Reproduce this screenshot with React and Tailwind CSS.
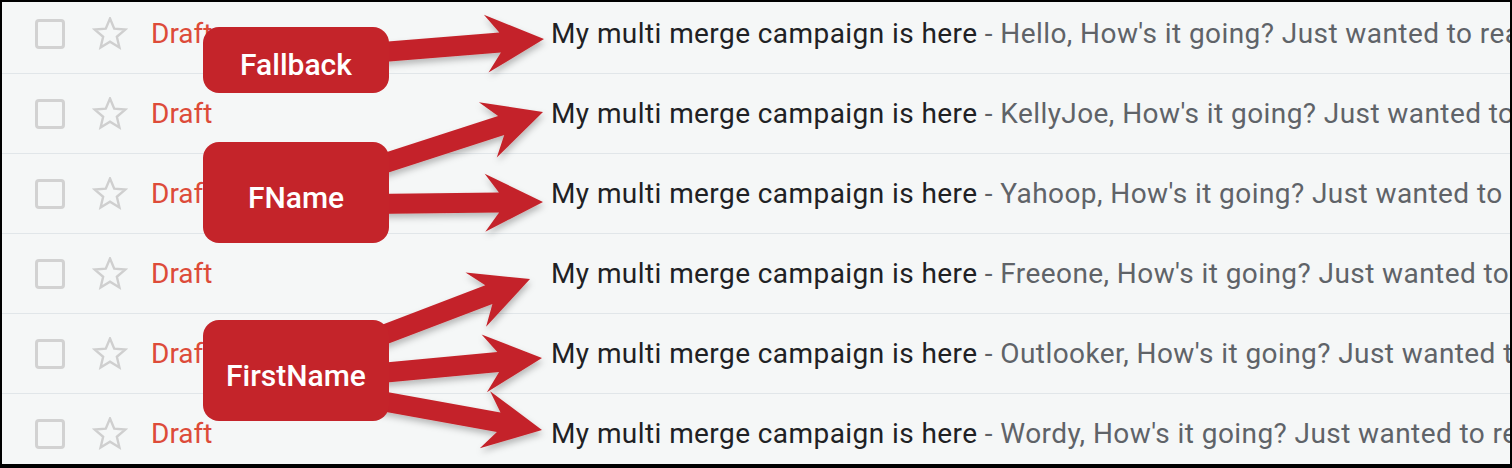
import React from "react";

const rows = [
  "Hello, How's it going? Just wanted to reach out and say hello",
  "KellyJoe, How's it going? Just wanted to reach out and say hello",
  "Yahoop, How's it going? Just wanted to reach out and say hello",
  "Freeone, How's it going? Just wanted to reach out and say hello",
  "Outlooker, How's it going? Just wanted to reach out and say hello",
  "Wordy, How's it going? Just wanted to reach out and say hello",
];

function Star() {
  return (
    <svg width="36" height="34" viewBox="0 0 36 34" className="shrink-0">
      <polygon
        points="18,1.5 22.23,11.68 33.22,12.56 24.85,19.72 27.4,30.44 18,24.7 8.6,30.44 11.15,19.72 2.78,12.56 13.77,11.68"
        fill="none"
        stroke="#cfcfcf"
        strokeWidth="2.4"
        strokeLinejoin="miter"
      />
    </svg>
  );
}

function arrowPoints(sx, sy, tx, ty) {
  const w = 20, L = 58, H = 29, b = 14;
  const dx = tx - sx, dy = ty - sy;
  const len = Math.hypot(dx, dy);
  const ux = dx / len, uy = dy / len;
  const nx = -uy, ny = ux;
  const pt = (a, n) => `${(sx + ux * a + nx * n).toFixed(1)},${(sy + uy * a + ny * n).toFixed(1)}`;
  return [
    pt(0, -w / 2),
    pt(len - L + b, -w / 2),
    pt(len - L, -H),
    pt(len, 0),
    pt(len - L, H),
    pt(len - L + b, w / 2),
    pt(0, w / 2),
  ].join(" ");
}

const arrows = [
  [370, 53, 544, 39],
  [370, 168, 543, 112],
  [370, 204, 543, 202],
  [370, 340, 530, 279],
  [370, 374, 542, 358],
  [370, 399, 542, 430],
];

function Callout({ label, className }) {
  return (
    <div
      className={
        "absolute left-[203px] w-[186px] rounded-[16px] bg-[#c4242a] flex items-center justify-center pt-[9px] text-white text-[30px] font-medium " +
        className
      }
      style={{ fontFamily: "Roboto, 'Liberation Sans', sans-serif" }}
    >
      {label}
    </div>
  );
}

export default function App() {
  return (
    <div
      className="relative w-[1512px] h-[468px] bg-black pt-[2px] px-[2px] pb-[4px]"
      style={{ fontFamily: "Roboto, 'Liberation Sans', sans-serif" }}
    >
      <div className="h-full w-full overflow-hidden bg-[#f5f7f7]">
        <div className="-mt-[8px] flex flex-col">
          {rows.map((snip, i) => (
            <div
              key={i}
              className="h-[80px] shrink-0 flex items-center border-b border-[#e1e6e9] pl-[33px] whitespace-nowrap text-[28px]"
            >
              <div className="w-[30px] h-[30px] shrink-0 rounded-[4px] border-[3px] border-[#d2d2d2]" />
              <div className="ml-[27px]">
                <Star />
              </div>
              <div className="ml-[23px] w-[400px] shrink-0 text-[#dd4b39]">Draft</div>
              <div className="text-[#202124] tracking-[0.42px]">
                My multi merge campaign is here
                <span className="text-[#5f6368]"> - {snip}</span>
              </div>
            </div>
          ))}
        </div>
      </div>

      <svg className="absolute left-0 top-0" width="1512" height="468" viewBox="0 0 1512 468">
        <defs>
          <filter id="sh" x="-20%" y="-40%" width="140%" height="180%">
            <feDropShadow dx="1" dy="4" stdDeviation="3" floodColor="#000" floodOpacity="0.25" />
          </filter>
        </defs>
        {arrows.map((a, i) => (
          <polygon key={i} points={arrowPoints(...a)} fill="#c4242a" filter="url(#sh)" />
        ))}
      </svg>

      <Callout label="Fallback" className="top-[27px] h-[66px]" />
      <Callout label="FName" className="top-[142px] h-[101px]" />
      <Callout label="FirstName" className="top-[320px] h-[101px]" />
    </div>
  );
}
